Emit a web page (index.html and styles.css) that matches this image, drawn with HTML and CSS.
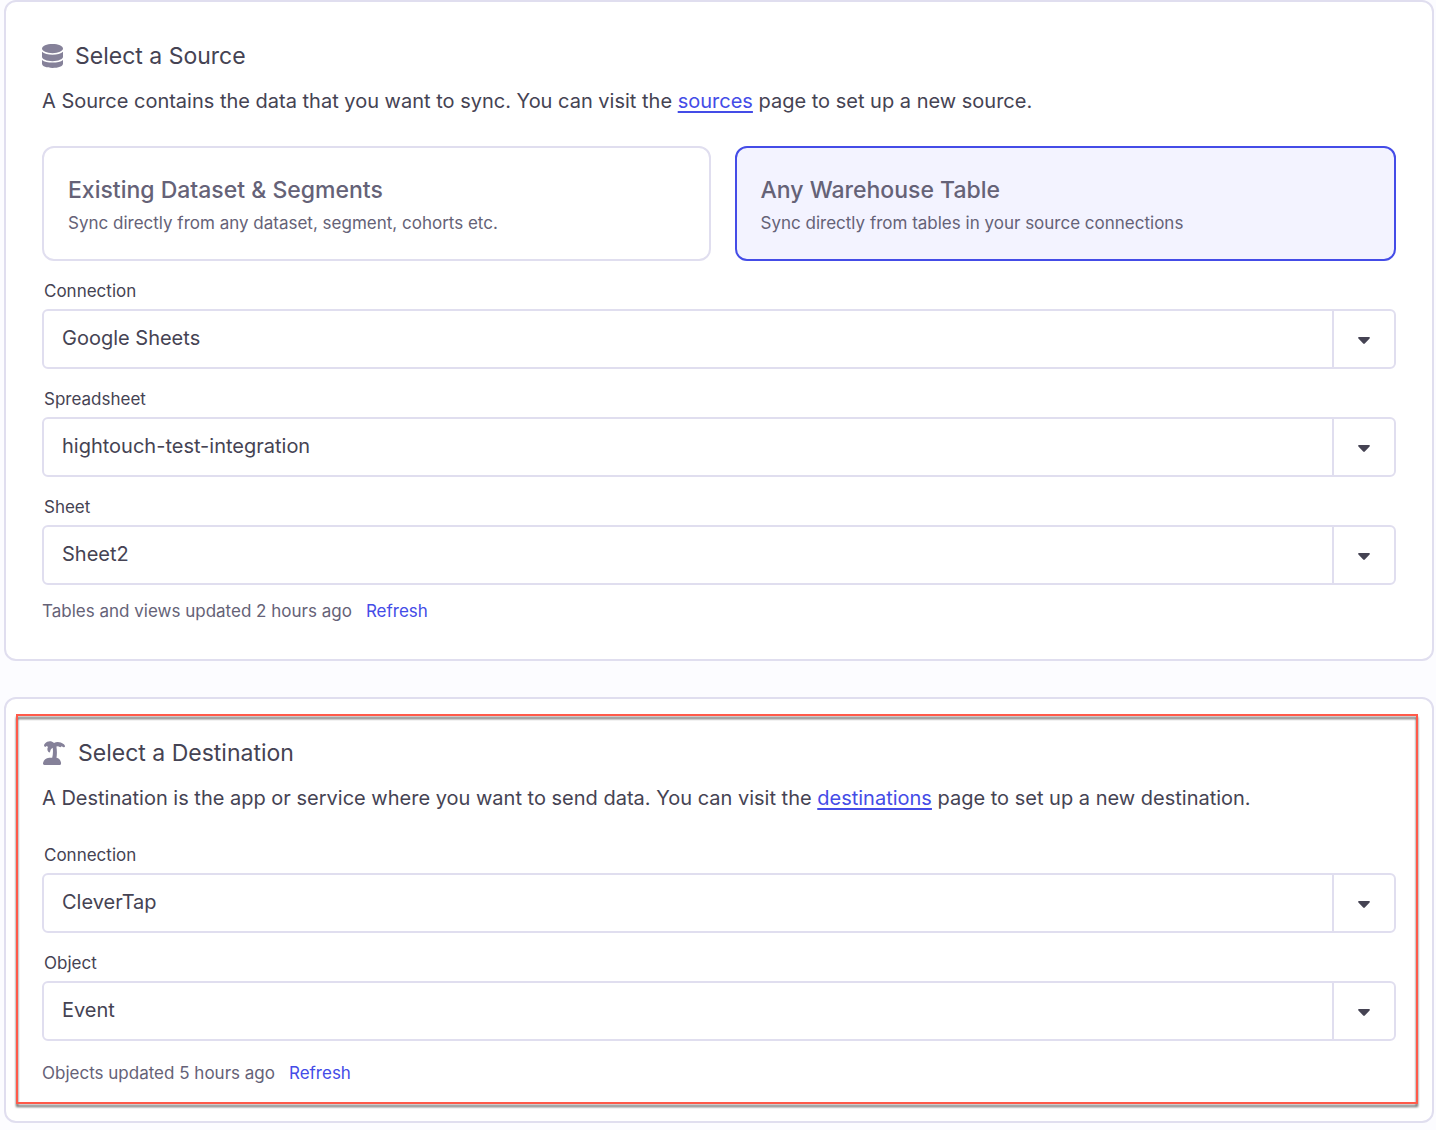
FILE: index.html
```html
<!DOCTYPE html>
<html lang="en">
<head>
<meta charset="utf-8">
<meta name="viewport" content="width=device-width, initial-scale=1">
<title>New sync</title>
<link rel="stylesheet" href="styles.css">
</head>
<body>
<main class="page">
  <section class="card">
    <h2 class="card-title">
      <svg class="icon-source" viewBox="0 0 21 24" aria-hidden="true">
        <path d="M0 4.6C0 2 4.7 0 10.500 0S21 2 21 4.600 16.300 9.200 10.500 9.200 0 7.200 0 4.600z"/>
        <path d="M0 7.800C2 9.700 6 10.800 10.500 10.800S19 9.700 21 7.800V12.800C21 15.200 16.300 17.200 10.500 17.200S0 15.200 0 12.800z"/>
        <path d="M0 15.900C2 17.600 6 18.600 10.500 18.600S19 17.600 21 15.900V19.800C21 22.200 16.300 24 10.500 24S0 22.200 0 19.800z"/>
      </svg>
      Select a Source
    </h2>
    <p class="card-text">A Source contains the data that you want to sync. You can visit the <a class="text-link" href="#sources">sources</a> page to set up a new source.</p>
    <div class="options" role="radiogroup" aria-label="Source type">
      <label class="option">
        <input class="option-input" type="radio" name="source-type">
        <span class="option-title">Existing Dataset &amp; Segments</span>
        <span class="option-text">Sync directly from any dataset, segment, cohorts etc.</span>
      </label>
      <label class="option">
        <input class="option-input" type="radio" name="source-type" checked>
        <span class="option-title">Any Warehouse Table</span>
        <span class="option-text">Sync directly from tables in your source connections</span>
      </label>
    </div>
    <div class="fields">
      <div class="field">
        <label class="field-label" for="source-connection">Connection</label>
        <div class="select-box">
          <select class="select" id="source-connection"><option>Google Sheets</option></select>
          <span class="select-arrow"><svg class="caret" viewBox="0 0 12 7" aria-hidden="true"><path d="M1 0h10a.8.8 0 0 1 .6 1.400L6.800 6.500a1.100 1.100 0 0 1-1.600 0L.4 1.400A.8.8 0 0 1 1 0z"/></svg></span>
        </div>
      </div>
      <div class="field">
        <label class="field-label" for="spreadsheet">Spreadsheet</label>
        <div class="select-box">
          <select class="select" id="spreadsheet"><option>hightouch-test-integration</option></select>
          <span class="select-arrow"><svg class="caret" viewBox="0 0 12 7" aria-hidden="true"><path d="M1 0h10a.8.8 0 0 1 .6 1.400L6.800 6.500a1.100 1.100 0 0 1-1.600 0L.4 1.400A.8.8 0 0 1 1 0z"/></svg></span>
        </div>
      </div>
      <div class="field">
        <label class="field-label" for="sheet">Sheet</label>
        <div class="select-box">
          <select class="select" id="sheet"><option>Sheet2</option></select>
          <span class="select-arrow"><svg class="caret" viewBox="0 0 12 7" aria-hidden="true"><path d="M1 0h10a.8.8 0 0 1 .6 1.400L6.800 6.500a1.100 1.100 0 0 1-1.600 0L.4 1.400A.8.8 0 0 1 1 0z"/></svg></span>
        </div>
      </div>
    </div>
    <div class="status">
      <span>Tables and views updated 2 hours ago</span>
      <button class="refresh" type="button">Refresh</button>
    </div>
  </section>

  <section class="card">
    <h2 class="card-title">
      <svg class="icon-destination" viewBox="0 0 24 24" aria-hidden="true">
        <path d="M3.200 5.900C1.700 5.300 1.600 3.900 3 2.500 5.500-.2 9.500-.4 12 1.900c3-1.600 7-.9 9.500 1.200 1 .8 1.600 1.700 1.500 2.500-.1.600-.8.800-1.500.6L19.600 5.300l-1.200 1-2.400-1.100-1.600.3c.6 3.500.7 7.200.1 11.300 2.300.4 4 2.200 4.500 4.800.2 1.300-.2 2.400-1.500 2.400H2.400C1.200 24 .8 23 1.100 21.800c.6-3 3-4.800 6-5h3.100c.8-3.300 1-6.700.5-10-1.400.8-2.300 2-2.500 3.600-.2 1-1 1.300-1.700.6-1.300-1.300-1.500-3.400-.5-5L4.800 4.900z"/>
      </svg>
      Select a Destination
    </h2>
    <p class="card-text">A Destination is the app or service where you want to send data. You can visit the <a class="text-link" href="#destinations">destinations</a> page to set up a new destination.</p>
    <div class="fields fields-first">
      <div class="field">
        <label class="field-label" for="destination-connection">Connection</label>
        <div class="select-box">
          <select class="select" id="destination-connection"><option>CleverTap</option></select>
          <span class="select-arrow"><svg class="caret" viewBox="0 0 12 7" aria-hidden="true"><path d="M1 0h10a.8.8 0 0 1 .6 1.400L6.800 6.500a1.100 1.100 0 0 1-1.600 0L.4 1.400A.8.8 0 0 1 1 0z"/></svg></span>
        </div>
      </div>
      <div class="field">
        <label class="field-label" for="object">Object</label>
        <div class="select-box">
          <select class="select" id="object"><option>Event</option></select>
          <span class="select-arrow"><svg class="caret" viewBox="0 0 12 7" aria-hidden="true"><path d="M1 0h10a.8.8 0 0 1 .6 1.400L6.800 6.500a1.100 1.100 0 0 1-1.600 0L.4 1.400A.8.8 0 0 1 1 0z"/></svg></span>
        </div>
      </div>
    </div>
    <div class="status status-spaced">
      <span>Objects updated 5 hours ago</span>
      <button class="refresh" type="button">Refresh</button>
    </div>
    <div class="highlight"></div>
  </section>
</main>
</body>
</html>
```

FILE: styles.css
```css
* {
  box-sizing: border-box;
}

body {
  margin: 0;
  background: #fcfcff;
  color: #454353;
  font-family: Inter, "Liberation Sans", sans-serif;
  font-size: 20px;
}

.page {
  display: flex;
  flex-direction: column;
  gap: 36px;
  padding: 0 2px 7px 4px;
}

.card {
  position: relative;
  padding: 36px;
  border: 2px solid #e0deef;
  border-radius: 12px;
  background: #fff;
}

.card-title {
  display: flex;
  align-items: center;
  gap: 12px;
  margin: 0 0 12px;
  font-size: 23px;
  font-weight: 400;
  line-height: 36px;
}

.icon-source,
.icon-destination {
  height: 24px;
  fill: #858199;
}

.icon-source {
  width: 21px;
}

.icon-destination {
  width: 24px;
}

.card-text {
  margin: 0;
  line-height: 30px;
}

.text-link {
  color: #444ce7;
  text-decoration-thickness: 2px;
  text-underline-offset: 3px;
}

.options {
  display: flex;
  gap: 24px;
  margin: 30px 0 18px;
}

.option {
  display: flex;
  flex: 1 1 auto;
  flex-direction: column;
  gap: 3px;
  padding: 24px;
  border: 2px solid #e0deef;
  border-radius: 12px;
  color: #656277;
  cursor: pointer;
}

.option:has(.option-input:checked) {
  border-color: #444ce7;
  background: #f3f3ff;
}

.option-input {
  position: absolute;
  margin: 0;
  opacity: 0;
}

.option-title {
  font-size: 23px;
  font-weight: 500;
  line-height: 36px;
}

.option-text {
  font-size: 17px;
  line-height: 24px;
}

.fields {
  display: flex;
  flex-direction: column;
  gap: 18px;
}

.fields-first {
  margin-top: 30px;
}

.field {
  display: flex;
  flex-direction: column;
  gap: 6px;
}

.field-label {
  padding-left: 2px;
  font-size: 17px;
  line-height: 24px;
}

.select-box {
  display: grid;
  height: 60px;
  border: 2px solid #e0deef;
  border-radius: 6px;
}

.select,
.select-arrow {
  grid-area: 1 / 1;
}

.select {
  appearance: none;
  width: 100%;
  margin: 0;
  padding: 0 80px 2px 18px;
  border: 0;
  background: transparent;
  color: inherit;
  font: inherit;
}

.select-arrow {
  display: flex;
  align-items: center;
  justify-content: center;
  justify-self: end;
  width: 62px;
  padding-top: 2px;
  border-left: 2px solid #e0deef;
  pointer-events: none;
}

.caret {
  width: 12px;
  height: 7px;
  fill: #454353;
}

.status {
  display: flex;
  gap: 14px;
  margin-top: 14px;
  color: #656277;
  font-size: 17px;
  line-height: 24px;
}

.status-spaced {
  margin-top: 20px;
}

.refresh {
  padding: 0;
  border: 0;
  background: none;
  color: #444ce7;
  font: inherit;
  cursor: pointer;
}

/* Callout frame drawn over the destination card */
.highlight {
  position: absolute;
  inset: 15px 14px 17px 10px;
  border: 2px solid #ff5a4a;
  filter: drop-shadow(0 3px 1px rgba(0, 0, 0, 0.6));
  pointer-events: none;
}
```
